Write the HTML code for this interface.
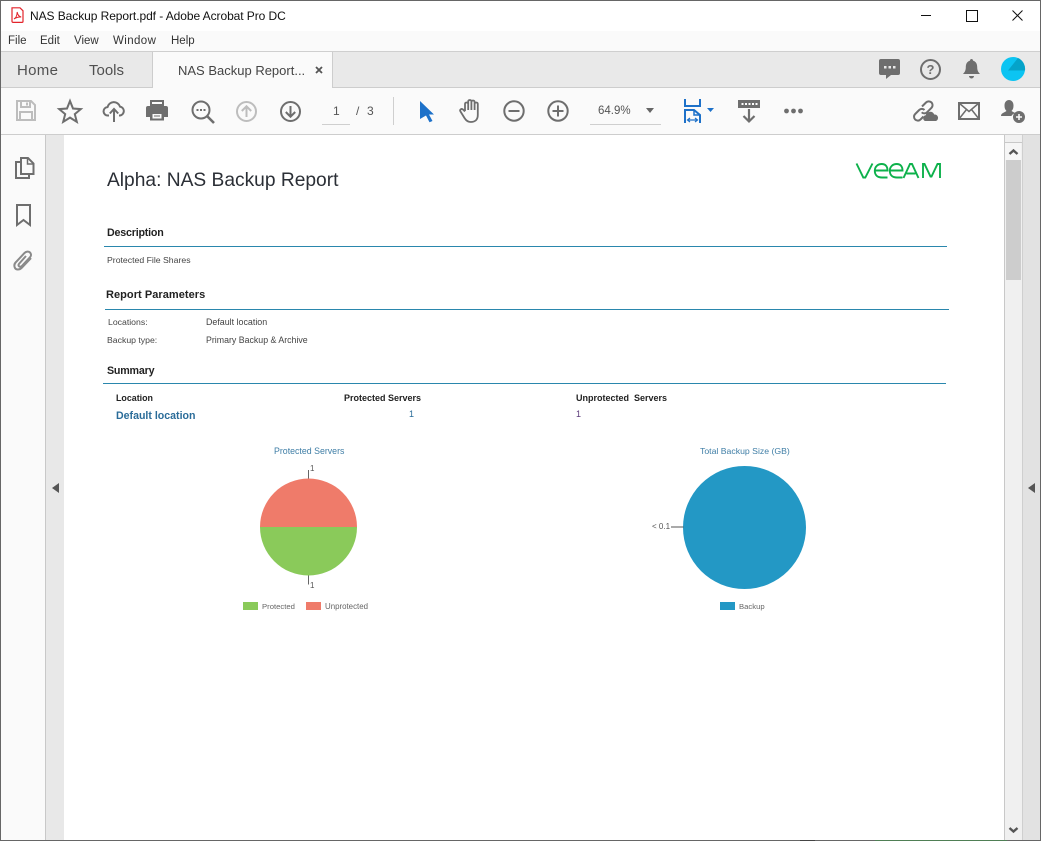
<!DOCTYPE html>
<html><head><meta charset="utf-8"><style>
html,body{margin:0;padding:0;width:1041px;height:841px;overflow:hidden;background:#fff}
body{position:relative;font-family:"Liberation Sans",sans-serif;color:#222}
.r{position:absolute}
.t{position:absolute;white-space:nowrap;line-height:1}
svg{position:absolute;overflow:visible}
.g{fill:none;stroke:#6e6e6e;stroke-width:2}
.f{fill:#6e6e6e}
</style></head><body>
<div class="r" style="left:0;top:31px;width:1041px;height:21px;background:#fafafa"></div>
<div class="r" style="left:0;top:51px;width:1041px;height:1px;background:#cfcfcf"></div>
<div class="r" style="left:0;top:52px;width:1041px;height:35px;background:#e9e9e9"></div>
<div class="r" style="left:0;top:87px;width:1041px;height:1px;background:#cdcdcd"></div>
<div class="r" style="left:0;top:88px;width:1041px;height:46px;background:#fafafa"></div>
<div class="r" style="left:0;top:134px;width:1041px;height:1px;background:#cdcdcd"></div>
<div class="r" style="left:152px;top:52px;width:181px;height:36px;background:#fafafa;border-left:1px solid #cdcdcd;border-right:1px solid #cdcdcd;box-sizing:border-box"></div>
<!-- side panels -->
<div class="r" style="left:0;top:135px;width:45px;height:706px;background:#fafafa"></div>
<div class="r" style="left:45px;top:135px;width:1px;height:706px;background:#c8c8c8"></div>
<div class="r" style="left:46px;top:135px;width:18px;height:706px;background:#e8e8e8"></div>
<div class="r" style="left:1004px;top:135px;width:1px;height:706px;background:#c8c8c8"></div>
<div class="r" style="left:1005px;top:135px;width:17px;height:706px;background:#f0f0f0"></div>
<div class="r" style="left:1005px;top:142px;width:17px;height:1px;background:#c8c8c8"></div>
<div class="r" style="left:1005px;top:143px;width:16px;height:17px;background:#f6f6f6"></div>
<div class="r" style="left:1006px;top:160px;width:15px;height:120px;background:#cdcdcd"></div>
<div class="r" style="left:1022px;top:135px;width:1px;height:706px;background:#cfcfcf"></div>
<div class="r" style="left:1023px;top:135px;width:17px;height:706px;background:#e2e2e2"></div>
<!-- window border -->
<div class="r" style="left:0;top:0;width:1041px;height:1px;background:#666"></div>
<div class="r" style="left:0;top:0;width:1px;height:841px;background:#666"></div>
<div class="r" style="left:1040px;top:0;width:1px;height:841px;background:#666"></div>
<div class="r" style="left:0;top:840px;width:1041px;height:1px;background:#666"></div>
<div class="r" style="left:800px;top:840px;width:15px;height:1px;background:#444"></div>
<div class="r" style="left:875px;top:840px;width:132px;height:1px;background:#4f7f55"></div>

<!-- title bar -->
<svg style="left:11px;top:7px" width="13" height="16" viewBox="0 0 13 16"><path d="M1 .8h8l3 3v10.600a1 1 0 0 1-1 1H2a1 1 0 0 1-1-1z" fill="#fff" stroke="#e3242b" stroke-width="1.200"/><path d="M3 12c2-1 3-3.500 3.200-7 .4 3 1.800 4.500 4 5-3-.2-5 .4-7.200 2z" fill="none" stroke="#e3242b" stroke-width="1"/></svg>
<div class="t" style="left:30px;top:10px;font-size:12px;color:#111;letter-spacing:-.07px">NAS Backup Report.pdf - Adobe Acrobat Pro DC</div>
<div class="r" style="left:921px;top:15px;width:10px;height:1px;background:#111"></div>
<div class="r" style="left:966px;top:10px;width:10px;height:10px;border:1px solid #111"></div>
<svg style="left:1012px;top:10px" width="11" height="11"><path d="M.5.500l10 10M10.500.500l-10 10" stroke="#111" stroke-width="1" fill="none"/></svg>

<!-- menu -->
<div class="t" style="left:8px;top:36px;font-size:11.500px;color:#333">File</div>
<div class="t" style="left:40px;top:36px;font-size:11.500px;color:#333">Edit</div>
<div class="t" style="left:74px;top:36px;font-size:11.500px;color:#333">View</div>
<div class="t" style="left:113px;top:36px;font-size:11.500px;color:#333;letter-spacing:.4px">Window</div>
<div class="t" style="left:171px;top:36px;font-size:11.500px;color:#333">Help</div>

<!-- tabs -->
<div class="t" style="left:17px;top:63px;font-size:15px;color:#505050;letter-spacing:.3px">Home</div>
<div class="t" style="left:89px;top:63px;font-size:15px;color:#505050">Tools</div>
<div class="t" style="left:178px;top:64px;font-size:13px;color:#444">NAS Backup Report...</div>
<svg style="left:315px;top:66px" width="8" height="8"><path d="M1 1l6 6M7 1l-6 6" stroke="#555" stroke-width="1.800"/></svg>

<!-- right tab icons -->
<svg style="left:879px;top:59px" width="22" height="21"><path d="M2 0h17a2 2 0 0 1 2 2v12a2 2 0 0 1-2 2H12l-5 4v-4H2a2 2 0 0 1-2-2V2a2 2 0 0 1 2-2z" class="f"/><rect x="5" y="7" width="2.500" height="2.500" fill="#e9e9e9"/><rect x="9.500" y="7" width="2.500" height="2.500" fill="#e9e9e9"/><rect x="14" y="7" width="2.500" height="2.500" fill="#e9e9e9"/></svg>
<svg style="left:920px;top:59px" width="21" height="21"><circle cx="10.500" cy="10.500" r="9.500" class="g"/><text x="10.500" y="15" text-anchor="middle" font-size="13" font-weight="bold" font-family="Liberation Sans" fill="#6e6e6e">?</text></svg>
<svg style="left:963px;top:59px" width="17" height="21"><path d="M8.500 0c1 0 1.500.700 1.500 1.600C13 2.500 14.200 5 14.200 8c0 3.500 1 5 2.800 7H0c1.800-2 2.800-3.500 2.800-7 0-3 1.200-5.500 4.200-6.400C7 .700 7.500 0 8.500 0z" class="f"/><path d="M6 17h5c0 1-1 2.500-2.500 2.500S6 18 6 17z" class="f"/></svg>
<svg style="left:1001px;top:57px" width="24" height="24"><circle cx="12" cy="12" r="12" fill="#0cc4f2"/><path d="M7 13.500 17 1a12 12 0 0 1 7 12.500z" fill="#05a3c9"/></svg>

<!-- toolbar icons -->
<svg style="left:16px;top:100px" width="20" height="21"><path d="M1 1h14l4 4v15H1z" fill="none" stroke="#bdbdbd" stroke-width="2"/><path d="M5 1v6h9V1M4 20v-8h12v8" fill="none" stroke="#bdbdbd" stroke-width="2"/><rect x="10" y="2.500" width="2" height="3" fill="#bdbdbd"/></svg>
<svg style="left:58px;top:99px" width="24" height="23"><path d="M12 2l3 7.500 7.800.600-6 5 2 7.700L12 18.600l-6.800 4.200 2-7.700-6-5L9 9.500z" fill="none" stroke="#6e6e6e" stroke-width="2" stroke-linejoin="miter"/></svg>
<svg style="left:103px;top:100px" width="22" height="22"><path d="M6 15.500H5A4.200 4.200 0 0 1 4.500 7.100 6.500 6.500 0 0 1 17 6.600a4.500 4.500 0 0 1 0 8.900h-1" fill="none" stroke="#6e6e6e" stroke-width="2"/><path d="M11 22V9.500M6.800 13.500 11 9l4.200 4.500" fill="none" stroke="#6e6e6e" stroke-width="2"/></svg>
<svg style="left:146px;top:100px" width="22" height="21"><path d="M5 1h12v4H5z" fill="none" stroke="#6e6e6e" stroke-width="2"/><path d="M2 6h18a2 2 0 0 1 2 2v9h-4v-5H4v5H0V8a2 2 0 0 1 2-2z" class="f"/><rect x="4" y="12" width="14" height="8.500" class="f"/><rect x="6.500" y="14" width="9" height="4.500" fill="#fafafa"/><rect x="8" y="15.500" width="6" height="1" fill="#6e6e6e"/></svg>
<svg style="left:191px;top:100px" width="24" height="24"><circle cx="10" cy="10" r="8.500" class="g"/><path d="M16 16l7 7" stroke="#6e6e6e" stroke-width="2.600"/><rect x="5.500" y="9" width="2" height="2" class="f"/><rect x="9" y="9" width="2" height="2" class="f"/><rect x="12.500" y="9" width="2" height="2" class="f"/></svg>
<svg style="left:236px;top:101px" width="21" height="21"><circle cx="10.500" cy="10.500" r="9.500" fill="none" stroke="#bdbdbd" stroke-width="2"/><path d="M10.500 16V5.500M5.800 10l4.700-4.700 4.700 4.700" fill="none" stroke="#bdbdbd" stroke-width="2"/></svg>
<svg style="left:280px;top:101px" width="21" height="21"><circle cx="10.500" cy="10.500" r="9.500" class="g"/><path d="M10.500 5v10.500M5.800 11l4.700 4.700 4.700-4.700" class="g"/></svg>

<div class="t" style="left:333px;top:105px;font-size:12px;color:#555">1</div>
<div class="t" style="left:356px;top:105px;font-size:12px;color:#555">/</div>
<div class="t" style="left:367px;top:105px;font-size:12px;color:#555">3</div>
<div class="r" style="left:322px;top:124px;width:28px;height:1px;background:#cfcfcf"></div>
<div class="r" style="left:393px;top:97px;width:1px;height:28px;background:#cfcfcf"></div>

<svg style="left:420px;top:101px" width="15" height="21"><path d="M0 0l14 13.500H9l3.500 6.500-3 1.300L6 14.500 0 18z" fill="#1d71c9"/></svg>
<svg style="left:459px;top:99px" width="22" height="24"><path d="M6 12V5c0-2 3.200-2 3.200 0v6M9.200 5V2.500c0-2 3.200-2 3.200 0V11M12.400 3c0-2 3.200-2 3.200 0v8M15.600 5c0-2 3.200-2 3.200 0V16c0 5-3 7-7 7-3 0-4.800-1.500-6.300-4L1.500 12.500c-1.200-1.700 1-3.400 2.500-2L6 12.500" fill="none" stroke="#6e6e6e" stroke-width="1.800"/></svg>
<svg style="left:503px;top:100px" width="22" height="22"><circle cx="11" cy="11" r="9.700" class="g"/><path d="M5.500 11h11" class="g"/></svg>
<svg style="left:547px;top:100px" width="22" height="22"><circle cx="11" cy="11" r="9.700" class="g"/><path d="M5.500 11h11M11 5.500v11" class="g"/></svg>

<div class="t" style="left:598px;top:106px;font-size:11.500px;color:#555">64.9%</div>
<svg style="left:646px;top:108px" width="8" height="5"><path d="M0 0h8L4 5z" fill="#666"/></svg>
<div class="r" style="left:590px;top:124px;width:71px;height:1px;background:#cfcfcf"></div>

<svg style="left:684px;top:99px" width="32" height="24"><path d="M1 0v7h15V0M1 24V11h9l6 5v8" fill="none" stroke="#1d71c9" stroke-width="2"/><path d="M10 11v5h6" fill="none" stroke="#1d71c9" stroke-width="1.500"/><path d="M4 21h9M6 19l-2.500 2L6 23M11 19l2.500 2L11 23" fill="none" stroke="#1d71c9" stroke-width="1.200"/><path d="M23 9h7l-3.500 4z" fill="#1d71c9"/></svg>
<svg style="left:738px;top:100px" width="22" height="23"><path d="M0 0h22v8H0z" class="f"/><path d="M11 9v12M5.500 16l5.500 5.500 5.500-5.500" class="g" style="stroke-width:2.200"/><rect x="3.500" y="3" width="2" height="2" fill="#fff"/><rect x="7" y="3" width="2" height="2" fill="#fff"/><rect x="10.500" y="3" width="2" height="2" fill="#fff"/><rect x="14" y="3" width="2" height="2" fill="#fff"/><rect x="17.500" y="3" width="2" height="2" fill="#fff"/></svg>
<svg style="left:784px;top:108px" width="19" height="6"><circle cx="2.500" cy="3" r="2.400" class="f"/><circle cx="9.500" cy="3" r="2.400" class="f"/><circle cx="16.500" cy="3" r="2.400" class="f"/></svg>

<svg style="left:913px;top:100px" width="25" height="22"><path d="M9 6.500l4-4a3.800 3.800 0 0 1 5.500 5.300l-4.500 4.500a3.800 3.800 0 0 1-5.300 0" fill="none" stroke="#6e6e6e" stroke-width="2"/><path d="M11.500 10a3.800 3.800 0 0 0-5.300 0l-4 4a3.800 3.800 0 0 0 5.300 5.500l3-3" fill="none" stroke="#6e6e6e" stroke-width="2"/><path d="M12 21a3 3 0 0 1 .7-5.700 4.500 4.500 0 0 1 8.500-.8 3.400 3.400 0 0 1 1.800 6.500z" class="f"/></svg>
<svg style="left:958px;top:102px" width="22" height="18"><rect x="1" y="1" width="20" height="16" class="g"/><path d="M1 1l10 8.500L21 1M1 17l7.500-9.500M21 17l-7.500-9.500" fill="none" stroke="#6e6e6e" stroke-width="1.500"/></svg>
<svg style="left:1001px;top:100px" width="24" height="23"><path d="M0 16c0-3 3.500-3.500 5.500-5-1.500-1.500-2-3-2-5.500C3.500 2 5.500 0 8 0s4.500 2 4.500 5.500c0 2.500-.5 4-2 5.500 1 .8 2.500 1.200 3.500 2-2 1-3.200 2-3.500 3z" class="f"/><circle cx="18" cy="17" r="6" class="f"/><path d="M15 17h6M18 14v6" stroke="#fafafa" stroke-width="1.600"/></svg>

<!-- left nav icons -->
<svg style="left:15px;top:157px" width="20" height="23"><path d="M6 1h7l5.500 5.500V17H6z" fill="none" stroke="#6e6e6e" stroke-width="2"/><path d="M12.500 1v6h6" fill="none" stroke="#6e6e6e" stroke-width="1.500"/><path d="M5 5H1v16h13v-3" fill="none" stroke="#6e6e6e" stroke-width="2"/></svg>
<svg style="left:16px;top:204px" width="15" height="23"><path d="M1 1h13v20l-6.500-5L1 21z" fill="none" stroke="#6e6e6e" stroke-width="2"/></svg>
<svg style="left:13px;top:250px" width="21" height="22"><path d="M18 8 8.500 18c-2 2-5.500 2-6.500 0s-1-4 1-6l8.500-9c1.500-1.500 4-2 5.500-.5s1.300 3.500-.2 5l-8 8.500c-1 1-2 1-2.800.3s-.6-1.800.3-2.800L13 6" fill="none" stroke="#8a8a8a" stroke-width="2"/></svg>

<svg style="left:52px;top:483px" width="7" height="10"><path d="M7 0v10L0 5z" fill="#555"/></svg>
<svg style="left:1028px;top:483px" width="7" height="10"><path d="M7 0v10L0 5z" fill="#555"/></svg>
<svg style="left:1008px;top:148px" width="11" height="7"><path d="M1.500 6l4-3.500 4 3.500" fill="none" stroke="#555" stroke-width="2.400"/></svg>
<svg style="left:1008px;top:827px" width="11" height="7"><path d="M1.500 1l4 3.500 4-3.500" fill="none" stroke="#555" stroke-width="2.400"/></svg>

<!-- document -->
<div class="t" style="left:107px;top:171px;font-size:19.200px;color:#2b2f36">Alpha: NAS Backup Report</div>
<svg style="left:856px;top:162px" width="86" height="17" viewBox="0 0 86 17"><g fill="none" stroke="#0db14b" stroke-width="1.900"><path d="M.5 1.500 7.300 15.500h2L16.500 1.500"/><path d="M19 8.500h12.500c0-4-2-6.500-5.800-6.500S18.800 4.500 18.800 8.800 21.500 15.500 26 15.500h5.500"/><path d="M34 8.500h12.500c0-4-2-6.500-5.800-6.500S33.800 4.500 33.800 8.800 36.500 15.500 41 15.500h5.500"/><path d="M47.500 16 54 2h2l6.500 14M50.500 11.500h9"/><path d="M67 16V2h1.500l6 12.500h1L81.500 2H84v14"/></g></svg>

<div class="t" style="left:107px;top:228px;font-size:10.700px;font-weight:bold;color:#222;letter-spacing:-.2px">Description</div>
<div class="r" style="left:104px;top:246px;width:843px;height:1px;background:#2a87ad"></div>
<div class="t" style="left:107px;top:256px;font-size:8.700px;color:#444">Protected File Shares</div>

<div class="t" style="left:106px;top:290px;font-size:11px;font-weight:bold;color:#222;letter-spacing:.05px">Report Parameters</div>
<div class="r" style="left:105px;top:309px;width:844px;height:1px;background:#2a87ad"></div>
<div class="t" style="left:108px;top:318px;font-size:8.700px;color:#444">Locations:</div>
<div class="t" style="left:206px;top:318px;font-size:8.900px;color:#444">Default location</div>
<div class="t" style="left:107px;top:336px;font-size:8.700px;color:#444">Backup type:</div>
<div class="t" style="left:206px;top:336px;font-size:8.800px;color:#444">Primary Backup &amp; Archive</div>

<div class="t" style="left:107px;top:366px;font-size:10.700px;font-weight:bold;color:#222;letter-spacing:-.2px">Summary</div>
<div class="r" style="left:103px;top:383px;width:843px;height:1px;background:#2a87ad"></div>
<div class="t" style="left:116px;top:394px;font-size:8.900px;font-weight:bold;color:#222">Location</div>
<div class="t" style="left:344px;top:394px;font-size:9px;font-weight:bold;color:#222">Protected Servers</div>
<div class="t" style="left:576px;top:394px;font-size:9px;font-weight:bold;color:#222">Unprotected&nbsp; Servers</div>
<div class="t" style="left:116px;top:411px;font-size:10.600px;font-weight:bold;color:#2a6c99">Default location</div>
<div class="t" style="left:409px;top:410px;font-size:9px;color:#2a6c99">1</div>
<div class="t" style="left:576px;top:410px;font-size:9px;color:#5b3a7a">1</div>

<!-- chart 1 -->
<div class="t" style="left:274px;top:447px;font-size:8.800px;color:#3f7ea6">Protected Servers</div>
<svg style="left:255px;top:460px" width="110" height="130"><path d="M5 67a48.500 48.500 0 0 1 97 0z" fill="#ef7b6a"/><path d="M5 67a48.500 48.500 0 0 0 97 0z" fill="#8aca5a"/><path d="M53.500 10v8.500M53.500 115.500v9" stroke="#666" stroke-width="1"/></svg>
<div class="t" style="left:310px;top:465px;font-size:8px;color:#555">1</div>
<div class="t" style="left:310px;top:582px;font-size:8px;color:#555">1</div>
<div class="r" style="left:243px;top:602px;width:15px;height:8px;background:#8aca5a"></div>
<div class="t" style="left:262px;top:603px;font-size:7.700px;color:#666">Protected</div>
<div class="r" style="left:306px;top:602px;width:15px;height:8px;background:#ef7b6a"></div>
<div class="t" style="left:325px;top:603px;font-size:7.900px;color:#666">Unprotected</div>

<!-- chart 2 -->
<div class="t" style="left:700px;top:447px;font-size:8.700px;color:#3f7ea6">Total Backup Size (GB)</div>
<svg style="left:670px;top:460px" width="140" height="135"><circle cx="74.500" cy="67.500" r="61.500" fill="#2398c5"/><path d="M1 67h12.500" stroke="#555" stroke-width="1"/></svg>
<div class="t" style="left:652px;top:523px;font-size:8px;color:#555">&lt; 0.1</div>
<div class="r" style="left:720px;top:602px;width:15px;height:8px;background:#2398c5"></div>
<div class="t" style="left:739px;top:603px;font-size:7.700px;color:#666">Backup</div>
</body></html>
